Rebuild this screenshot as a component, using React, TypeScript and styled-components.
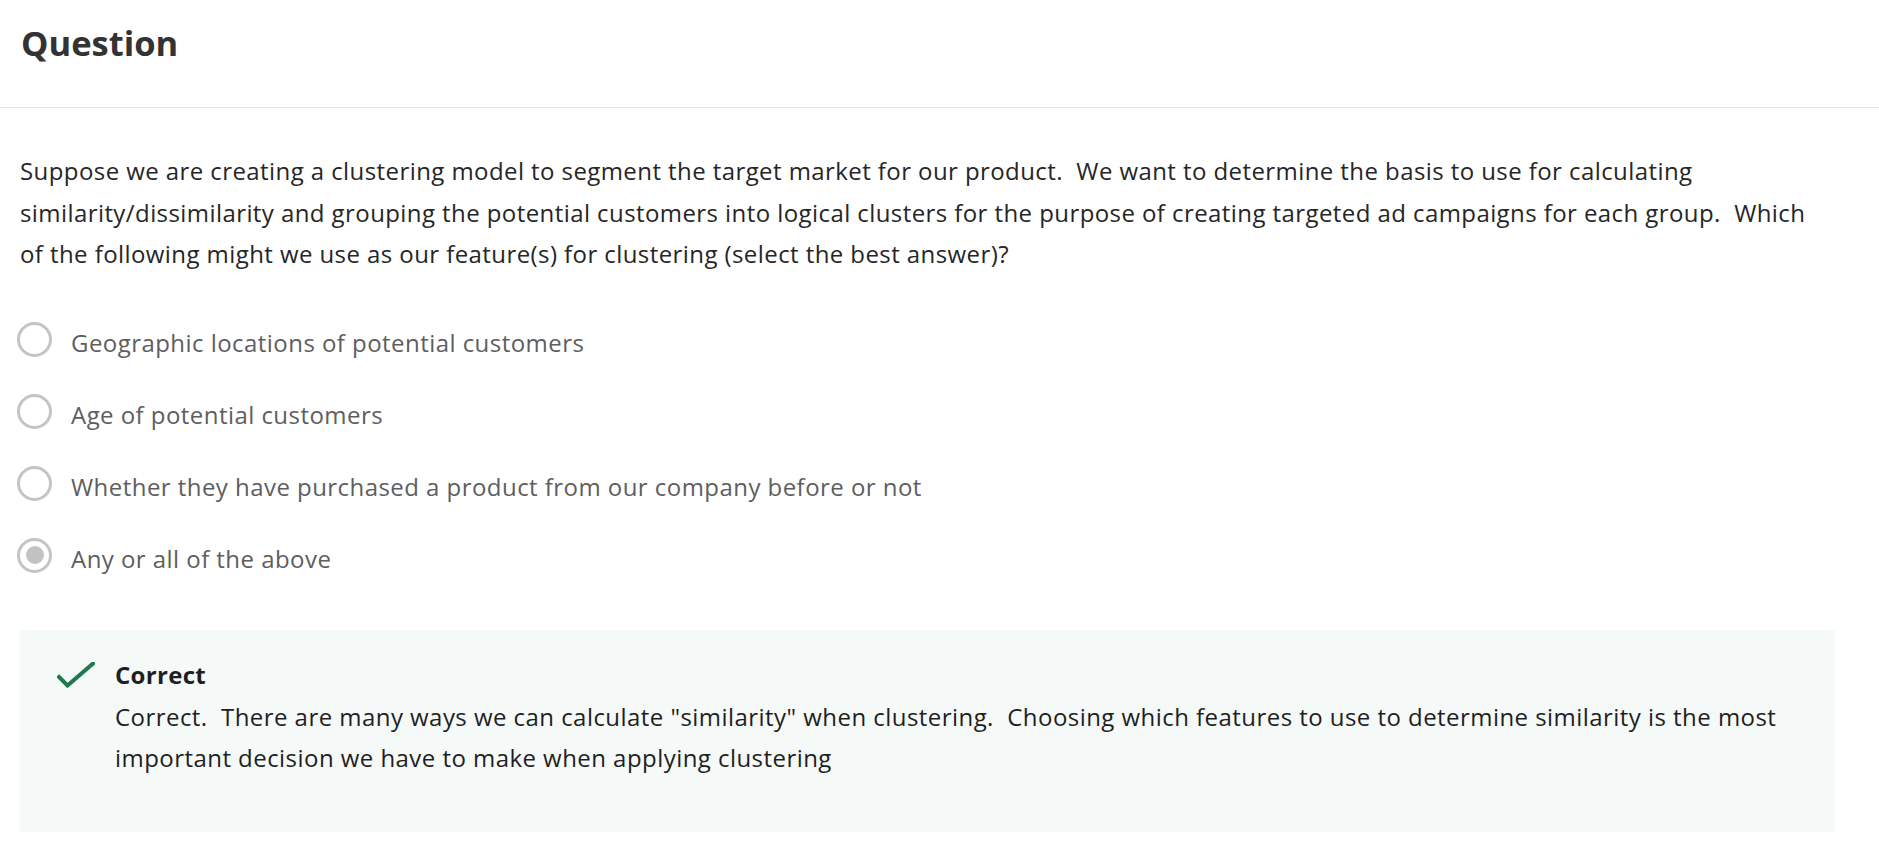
import React from "react";
import styled, { createGlobalStyle } from "styled-components";

const GlobalStyle = createGlobalStyle`
  html, body {
    margin: 0;
    padding: 0;
    background: #ffffff;
  }
  body {
    font-family: "Open Sans", "Noto Sans", "Liberation Sans", sans-serif;
    -webkit-font-smoothing: antialiased;
  }
  * { box-sizing: border-box; }
`;

const Page = styled.div`
  width: 100%;
  min-height: 852px;
  background: #ffffff;
`;

const Header = styled.header`
  height: 108px;
  border-bottom: 1px solid #e5e5e5;
  padding: 21px 0 0 21px;
`;

const Title = styled.h2`
  margin: 0;
  font-size: 34.5px;
  line-height: 44px;
  font-weight: 700;
  color: #333333;
`;

const Body = styled.main`
  padding: 42px 44px 0 20px;
`;

const Prompt = styled.p`
  margin: 0;
  max-width: 1795px;
  font-size: 24px;
  letter-spacing: 0.42px;
  line-height: 41.5px;
  color: #262626;
`;

const Options = styled.div`
  display: flex;
  flex-direction: column;
  gap: 30.5px;
  margin-top: 47px;
`;

const OptionRow = styled.label`
  display: flex;
  align-items: flex-start;
  gap: 19px;
  cursor: pointer;
`;

const Radio = styled.span<{ $checked?: boolean }>`
  flex: none;
  width: 35px;
  height: 35px;
  margin-left: -3px;
  border-radius: 50%;
  border: 3.3px solid #c4c4c4;
  background: #ffffff;
  display: flex;
  align-items: center;
  justify-content: center;

  &::after {
    content: "";
    display: ${(p) => (p.$checked ? "block" : "none")};
    width: 18px;
    height: 18px;
    border-radius: 50%;
    background: #c2c2c2;
  }
`;

const OptionText = styled.span`
  font-size: 24px;
  letter-spacing: 0.45px;
  line-height: 41.5px;
  color: #5e5e5e;
`;

const Feedback = styled.section`
  margin-top: 50.5px;
  margin-left: -1px;
  width: 1816px;
  height: 202px;
  background: #f5f9f8;
  padding: 24px 40px 0 38px;
  display: flex;
  align-items: flex-start;
  gap: 20px;
`;

const CheckIcon = styled.svg`
  flex: none;
  width: 38px;
  height: 30px;
  margin-top: 8px;
`;

const FeedbackContent = styled.div`
  display: flex;
  flex-direction: column;
`;

const FeedbackTitle = styled.div`
  font-size: 24px;
  letter-spacing: 0.3px;
  line-height: 41.5px;
  font-weight: 700;
  color: #1f1f1f;
`;

const FeedbackText = styled.div`
  margin-top: 2px;
  font-size: 24px;
  letter-spacing: 0.45px;
  line-height: 40.5px;
  color: #1f1f1f;
  max-width: 1700px;
`;

const options = [
  { text: "Geographic locations of potential customers", checked: false },
  { text: "Age of potential customers", checked: false },
  { text: "Whether they have purchased a product from our company before or not", checked: false },
  { text: "Any or all of the above", checked: true },
];

export default function App() {
  return (
    <Page>
      <GlobalStyle />
      <Header>
        <Title>Question</Title>
      </Header>
      <Body>
        <Prompt>
          Suppose we are creating a clustering model to segment the target market for our product.{"\u00a0 "}We want
          to determine the basis to use for calculating similarity/dissimilarity and grouping the potential customers
          into logical clusters for the purpose of creating targeted ad campaigns for each group.{"\u00a0 "}Which of
          the following might we use as our feature(s) for clustering (select the best answer)?
        </Prompt>
        <Options>
          {options.map((o) => (
            <OptionRow key={o.text}>
              <Radio $checked={o.checked} />
              <OptionText>{o.text}</OptionText>
            </OptionRow>
          ))}
        </Options>
        <Feedback>
          <CheckIcon viewBox="0 0 38 30" aria-hidden="true">
            <polyline
              points="2,15 10.5,23.5 36,1.5"
              fill="none"
              stroke="#1e7a4e"
              strokeWidth="4"
              strokeLinecap="square"
              strokeLinejoin="miter"
            />
          </CheckIcon>
          <FeedbackContent>
            <FeedbackTitle>Correct</FeedbackTitle>
            <FeedbackText>
              Correct.{"\u00a0 "}There are many ways we can calculate "similarity" when clustering.{"\u00a0 "}Choosing
              which features to use to determine similarity is the most important decision we have to make when
              applying clustering
            </FeedbackText>
          </FeedbackContent>
        </Feedback>
      </Body>
    </Page>
  );
}
